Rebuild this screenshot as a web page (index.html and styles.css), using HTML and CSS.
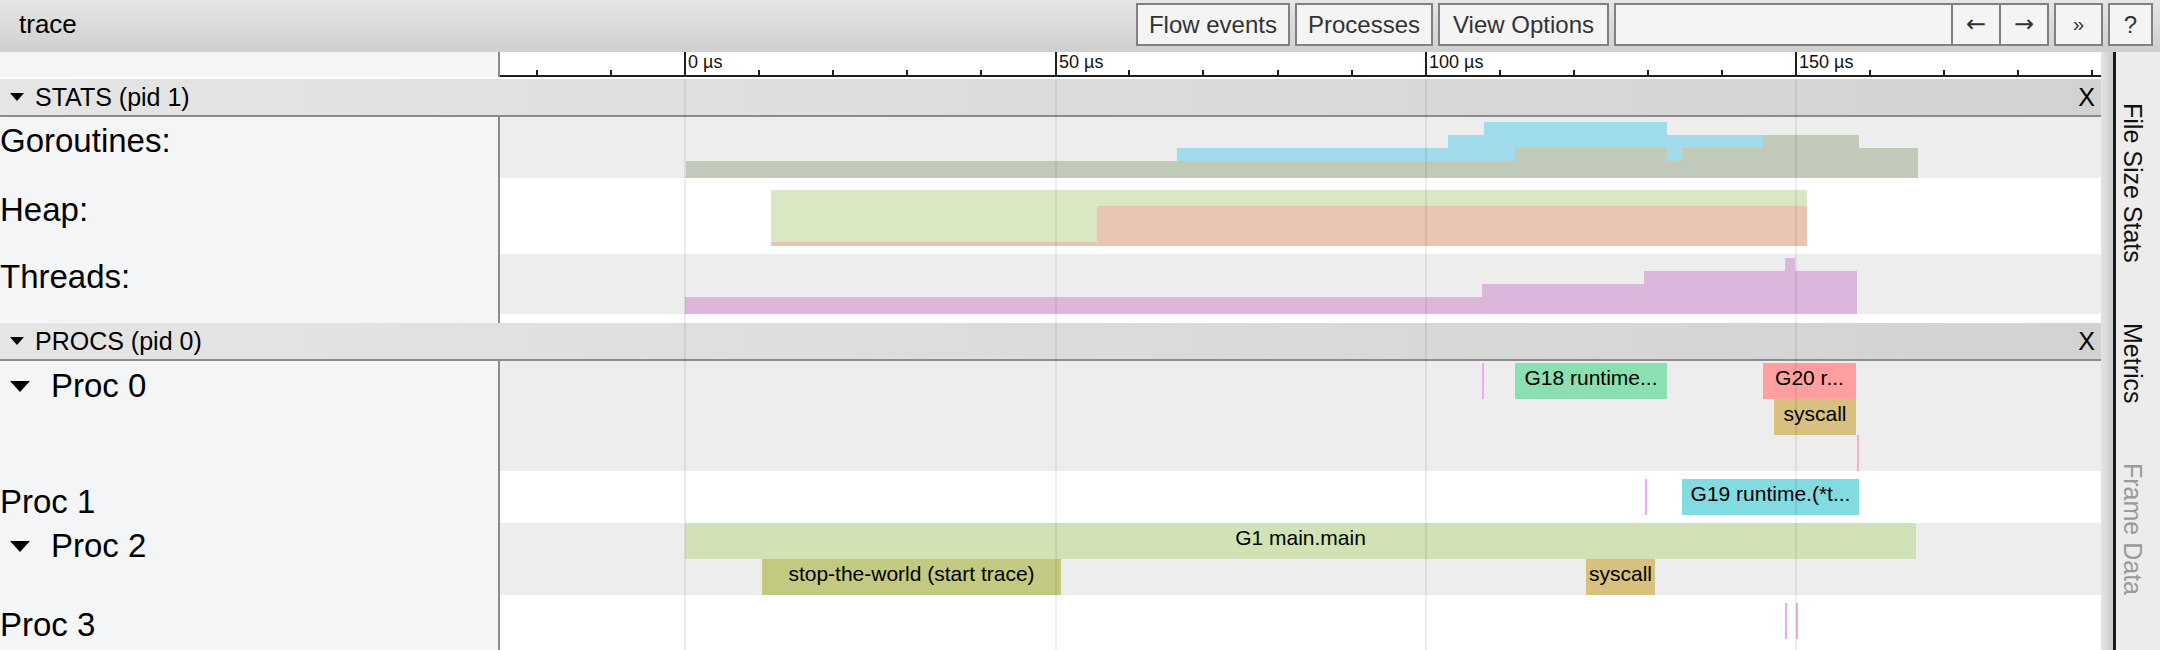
FILE: index.html
```html
<!DOCTYPE html>
<html lang="en">
<head>
<meta charset="utf-8">
<title>trace</title>
<link rel="stylesheet" href="styles.css">
</head>
<body>
<div class="app">
  <header class="topbar">
    <div class="title">trace</div>
    <nav class="controls">
      <button class="btn">Flow events</button>
      <button class="btn">Processes</button>
      <button class="btn btn-wide">View Options</button>
      <div class="search">
        <span class="search-field"></span>
        <button class="search-btn">&larr;</button>
        <button class="search-btn">&rarr;</button>
      </div>
      <button class="btn btn-more">&raquo;</button>
      <button class="btn btn-help">?</button>
    </nav>
  </header>

  <div class="main">
    <section class="timeline">
      <div class="ruler-row">
        <div class="ruler-spacer"></div>
        <div class="ruler">
          <div class="tick" style="left:36px"></div>
          <div class="tick" style="left:110px"></div>
          <div class="tick major" style="left:184px"><span>0 µs</span></div>
          <div class="tick" style="left:258px"></div>
          <div class="tick" style="left:332px"></div>
          <div class="tick" style="left:406px"></div>
          <div class="tick" style="left:480px"></div>
          <div class="tick major" style="left:555px"><span>50 µs</span></div>
          <div class="tick" style="left:628px"></div>
          <div class="tick" style="left:702px"></div>
          <div class="tick" style="left:777px"></div>
          <div class="tick" style="left:851px"></div>
          <div class="tick major" style="left:925px"><span>100 µs</span></div>
          <div class="tick" style="left:999px"></div>
          <div class="tick" style="left:1073px"></div>
          <div class="tick" style="left:1147px"></div>
          <div class="tick" style="left:1221px"></div>
          <div class="tick major" style="left:1295px"><span>150 µs</span></div>
          <div class="tick" style="left:1369px"></div>
          <div class="tick" style="left:1443px"></div>
          <div class="tick" style="left:1517px"></div>
          <div class="tick" style="left:1591px"></div>
        </div>
      </div>

      <div class="tracks">
        <div class="proc-header">
          <span class="caret-small"></span>
          <span class="proc-title">STATS (pid 1)</span>
          <span class="close">X</span>
        </div>

        <div class="row row-goroutines">
          <div class="label">Goroutines:</div>
          <div class="track alt">
            <svg class="counter" width="1601" height="61" viewBox="0 0 1601 61">
              <path fill="#a0dcec" d="M677,61 V31 H948 V18 H984 V5 H1167 V18 H1263 V61 Z"/>
              <path fill="#c1cab9" d="M186,61 V44 H1015 V31 H1167 V44 H1182 V31 H1263 V18 H1359 V31 H1418 V61 Z"/>
            </svg>
          </div>
        </div>

        <div class="row row-heap">
          <div class="label">Heap:</div>
          <div class="track">
            <svg class="counter" width="1601" height="76" viewBox="0 0 1601 76">
              <path fill="#e8c4b2" d="M271,68 V64 H597 V28 H1307 V68 Z"/>
              <path fill="#d9e8c3" d="M271,64 V12 H1307 V28 H597 V64 Z"/>
            </svg>
          </div>
        </div>

        <div class="row row-threads">
          <div class="label">Threads:</div>
          <div class="track alt">
            <svg class="counter" width="1601" height="60" viewBox="0 0 1601 60">
              <path fill="#dbb8db" d="M185,60 V43 H982 V30 H1144 V17 H1285 V4 H1295 V17 H1357 V60 Z"/>
            </svg>
          </div>
        </div>

        <div class="row row-spacer">
          <div class="label"></div>
          <div class="track"></div>
        </div>

        <div class="proc-header">
          <span class="caret-small"></span>
          <span class="proc-title">PROCS (pid 0)</span>
          <span class="close">X</span>
        </div>

        <div class="row row-proc0">
          <div class="label label-expand"><span class="caret"></span>Proc 0</div>
          <div class="track alt">
            <div class="mark mark-violet" style="left:982px;top:2px"></div>
            <div class="slice s-mint" style="left:1015px;top:2px;width:152px">G18 runtime...</div>
            <div class="slice s-rose" style="left:1263px;top:2px;width:93px">G20 r...</div>
            <div class="slice s-tan" style="left:1274px;top:38px;width:82px">syscall</div>
            <div class="mark mark-pink" style="left:1357px;top:74px"></div>
          </div>
        </div>

        <div class="row row-proc1">
          <div class="label">Proc 1</div>
          <div class="track">
            <div class="mark mark-violet" style="left:1145px;top:8px"></div>
            <div class="slice s-cyan" style="left:1182px;top:8px;width:177px">G19 runtime.(*t...</div>
          </div>
        </div>

        <div class="row row-proc2">
          <div class="label label-expand"><span class="caret"></span>Proc 2</div>
          <div class="track alt">
            <div class="slice s-green" style="left:185px;top:0;width:1231px">G1 main.main</div>
            <div class="slice s-olive" style="left:262px;top:36px;width:299px">stop-the-world (start trace)</div>
            <div class="slice s-tan" style="left:1086px;top:36px;width:69px">syscall</div>
          </div>
        </div>

        <div class="row row-proc3">
          <div class="label">Proc 3</div>
          <div class="track">
            <div class="mark mark-violet" style="left:1285px;top:8px"></div>
            <div class="mark mark-pink" style="left:1296px;top:8px"></div>
          </div>
        </div>

        <div class="grid">
          <div class="grid-line" style="left:184px"></div>
          <div class="grid-line" style="left:555px"></div>
          <div class="grid-line" style="left:925px"></div>
          <div class="grid-line" style="left:1295px"></div>
        </div>
      </div>
    </section>

    <div class="splitter"></div>

    <aside class="sidebar">
      <div class="tab">File Size Stats</div>
      <div class="tab">Metrics</div>
      <div class="tab tab-disabled">Frame Data</div>
    </aside>
  </div>
</div>
</body>
</html>
```

FILE: styles.css
```css
* {
  box-sizing: border-box;
  margin: 0;
  padding: 0;
}

html, body {
  width: 2160px;
  height: 650px;
  overflow: hidden;
  background: #fff;
}

body {
  font-family: "Liberation Sans", Arial, Helvetica, sans-serif;
  color: #000;
}

.app {
  display: flex;
  flex-direction: column;
  height: 650px;
}

/* ---------- top bar ---------- */
.topbar {
  flex: none;
  height: 52px;
  display: flex;
  align-items: flex-start;
  background: linear-gradient(#e6e6e6, #cfcfcf);
}

.title {
  font-size: 26px;
  line-height: 29px;
  padding: 10px 0 0 19px;
}

.controls {
  margin-left: auto;
  display: flex;
  gap: 5px;
  padding: 3px 7px 0 0;
}

.btn {
  height: 43px;
  padding: 0 11px;
  border: 2px solid #808080;
  background: #f4f4f4;
  color: #333;
  font: 24px "Liberation Sans", Arial, sans-serif;
  line-height: 39px;
}

.btn-wide {
  padding: 0 13px;
}

.btn-more {
  width: 49px;
  padding: 0;
  font-size: 20px;
}

.btn-help {
  width: 45px;
  padding: 0;
}

.search {
  display: flex;
  height: 43px;
  border: 2px solid #808080;
  background: #f4f4f4;
}

.search-field {
  width: 335px;
}

.search-btn {
  width: 48px;
  border: 0;
  border-left: 2px solid #808080;
  background: #f4f4f4;
  color: #333;
  font: 24px "DejaVu Sans", sans-serif;
  line-height: 39px;
}

/* ---------- main area ---------- */
.main {
  flex: 1;
  display: flex;
  min-height: 0;
}

.timeline {
  width: 2101px;
  flex: none;
  display: flex;
  flex-direction: column;
  overflow: hidden;
}

.ruler-row {
  flex: none;
  height: 25px;
  display: flex;
  margin-bottom: 2px;
}

.ruler-spacer {
  width: 500px;
  flex: none;
  background: #f4f5f7;
  border-right: 2px solid #8a8a8a;
}

.ruler {
  flex: 1;
  position: relative;
  background: #fff;
  border-bottom: 2px solid #1e1e1e;
}

.tick {
  position: absolute;
  bottom: 0;
  width: 2px;
  height: 5px;
  background: #1e1e1e;
}

.tick.major {
  height: 100%;
}

.tick span {
  position: absolute;
  left: 4px;
  top: 0;
  font-size: 18px;
  line-height: 20px;
  white-space: nowrap;
  color: #111;
}

.tracks {
  position: relative;
  flex: 1;
}

.proc-header {
  height: 38px;
  display: flex;
  align-items: center;
  padding: 0 6px 0 10px;
  background: linear-gradient(to right, #e5e5e5, #d2d2d2);
  border-bottom: 2px solid #8c8c8c;
  font-size: 25px;
}

.caret-small {
  width: 0;
  height: 0;
  border-left: 7px solid transparent;
  border-right: 7px solid transparent;
  border-top: 8px solid #000;
  margin-right: 11px;
}

.close {
  margin-left: auto;
}

.row {
  display: flex;
}

.label {
  width: 500px;
  flex: none;
  background: #f4f5f7;
  border-right: 2px solid #8c8c8c;
  font-size: 33px;
  line-height: 38px;
  white-space: nowrap;
}

.label-expand {
  display: flex;
  align-items: flex-start;
}

.caret {
  width: 0;
  height: 0;
  margin: 14px 21px 0 10px;
  border-left: 10px solid transparent;
  border-right: 10px solid transparent;
  border-top: 11px solid #000;
}

.track {
  flex: 1;
  position: relative;
  background: #fff;
}

.track.alt {
  background: #ededed;
}

.counter {
  display: block;
}

.row-goroutines { height: 61px; }
.row-goroutines .label { padding-top: 5px; }

.row-heap { height: 76px; }
.row-heap .label { padding-top: 13px; }

.row-threads { height: 60px; }
.row-threads .label { padding-top: 4px; }

.row-spacer { height: 9px; }

.row-proc0 { height: 110px; }
.row-proc0 .label { padding-top: 6px; }

.row-proc1 { height: 52px; }
.row-proc1 .label { padding-top: 12px; }

.row-proc2 { height: 72px; }
.row-proc2 .label { padding-top: 4px; }

.row-proc3 { height: 80px; }
.row-proc3 .label { padding-top: 11px; }

/* slices */
.slice {
  position: absolute;
  height: 36px;
  font-size: 21px;
  line-height: 29px;
  text-align: center;
  white-space: nowrap;
  overflow: hidden;
  color: #000;
}

.s-mint  { background: #8ae0b1; }
.s-rose  { background: #ff9f9f; }
.s-tan   { background: #d8c07f; }
.s-cyan  { background: #81dbe0; }
.s-green { background: #d1e3b5; }
.s-olive { background: #c4c981; }

.mark {
  position: absolute;
  width: 2px;
  height: 36px;
}

.mark-violet { background: #f3a6f3; }
.mark-pink   { background: #f2b3c6; }

/* grid lines */
.grid {
  position: absolute;
  top: 0;
  bottom: 0;
  left: 500px;
  right: 0;
  pointer-events: none;
}

.grid-line {
  position: absolute;
  top: 0;
  bottom: 0;
  width: 2px;
  background: rgba(0, 0, 0, 0.07);
}

/* ---------- side panel ---------- */
.splitter {
  width: 15px;
  flex: none;
  background: linear-gradient(to right, #e4e4e4, #cbcbcb);
  border-right: 3px solid #1a1a1a;
}

.sidebar {
  flex: 1;
  background: #ececec;
  display: flex;
  flex-direction: column;
  align-items: flex-start;
  padding: 21px 0 0 2px;
}

.tab {
  writing-mode: vertical-rl;
  font-size: 25px;
  padding: 30px 0;
  color: #111;
  white-space: nowrap;
}

.tab-disabled {
  color: #9a9a9a;
}
```
